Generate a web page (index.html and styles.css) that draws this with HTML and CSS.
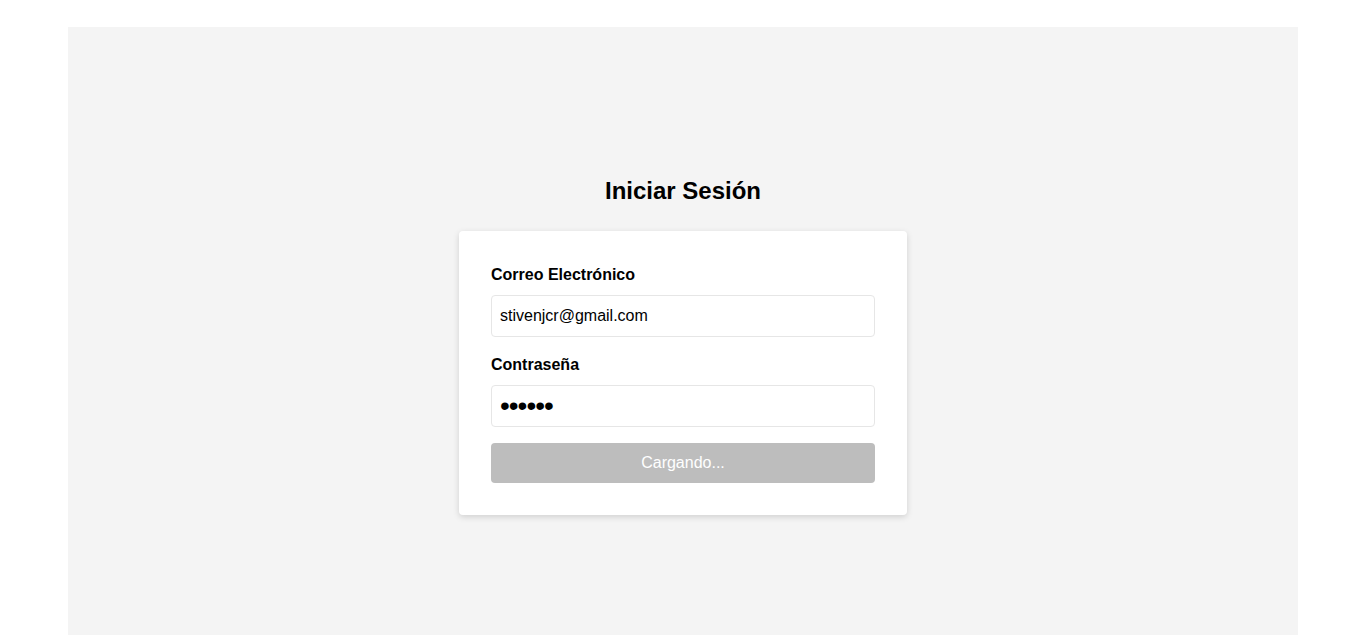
FILE: index.html
```html
<!DOCTYPE html>
<html lang="es">
<head>
<meta charset="utf-8">
<title>Iniciar Sesión</title>
<link rel="stylesheet" href="styles.css">
</head>
<body>
<main class="page">
  <h2 class="title">Iniciar Sesión</h2>
  <form class="card">
    <div class="group">
      <label class="label" for="email">Correo Electrónico</label>
      <input class="input" id="email" type="email" value="stivenjcr@gmail.com">
    </div>
    <div class="group">
      <label class="label" for="pass">Contraseña</label>
      <input class="input input-pass" id="pass" type="password" value="123456">
    </div>
    <button class="btn" type="button" disabled>Cargando...</button>
  </form>
</main>
</body>
</html>
```
FILE: styles.css
```css
html, body {
  margin: 0;
  padding: 0;
  background: #ffffff;
  font-family: "Liberation Sans", Arial, sans-serif;
  color: #000;
}
.page {
  width: 1230px;
  margin: 27px auto 0;
  min-height: 635px;
  background: #f4f4f4;
  display: flex;
  flex-direction: column;
  align-items: center;
  justify-content: center;
  box-sizing: border-box;
  padding-top: 2px;
}
.title {
  margin: 0 0 26px;
  font-size: 24px;
  font-weight: bold;
  line-height: 28px;
}
.card {
  width: 448px;
  box-sizing: border-box;
  padding: 32px;
  background: #fff;
  border-radius: 4px;
  box-shadow: 0 2px 6px rgba(0, 0, 0, 0.15);
  display: flex;
  flex-direction: column;
}
.group {
  display: flex;
  flex-direction: column;
  margin-bottom: 16px;
}
.label {
  font-size: 16px;
  font-weight: bold;
  line-height: 24px;
  margin-bottom: 8px;
}
.input {
  height: 42px;
  box-sizing: border-box;
  border: 1px solid #e6e6e6;
  border-radius: 4px;
  padding: 0 8px;
  font-family: "Liberation Sans", Arial, sans-serif;
  font-size: 16px;
  color: #000;
  background: #fff;
  outline: none;
}
.input-pass {
  font-size: 28px;
  letter-spacing: -1px;
}
.btn {
  height: 40px;
  border: none;
  border-radius: 4px;
  background: #bdbdbd;
  color: #fff;
  font-family: "Liberation Sans", Arial, sans-serif;
  font-size: 16px;
  padding: 0;
}
```
